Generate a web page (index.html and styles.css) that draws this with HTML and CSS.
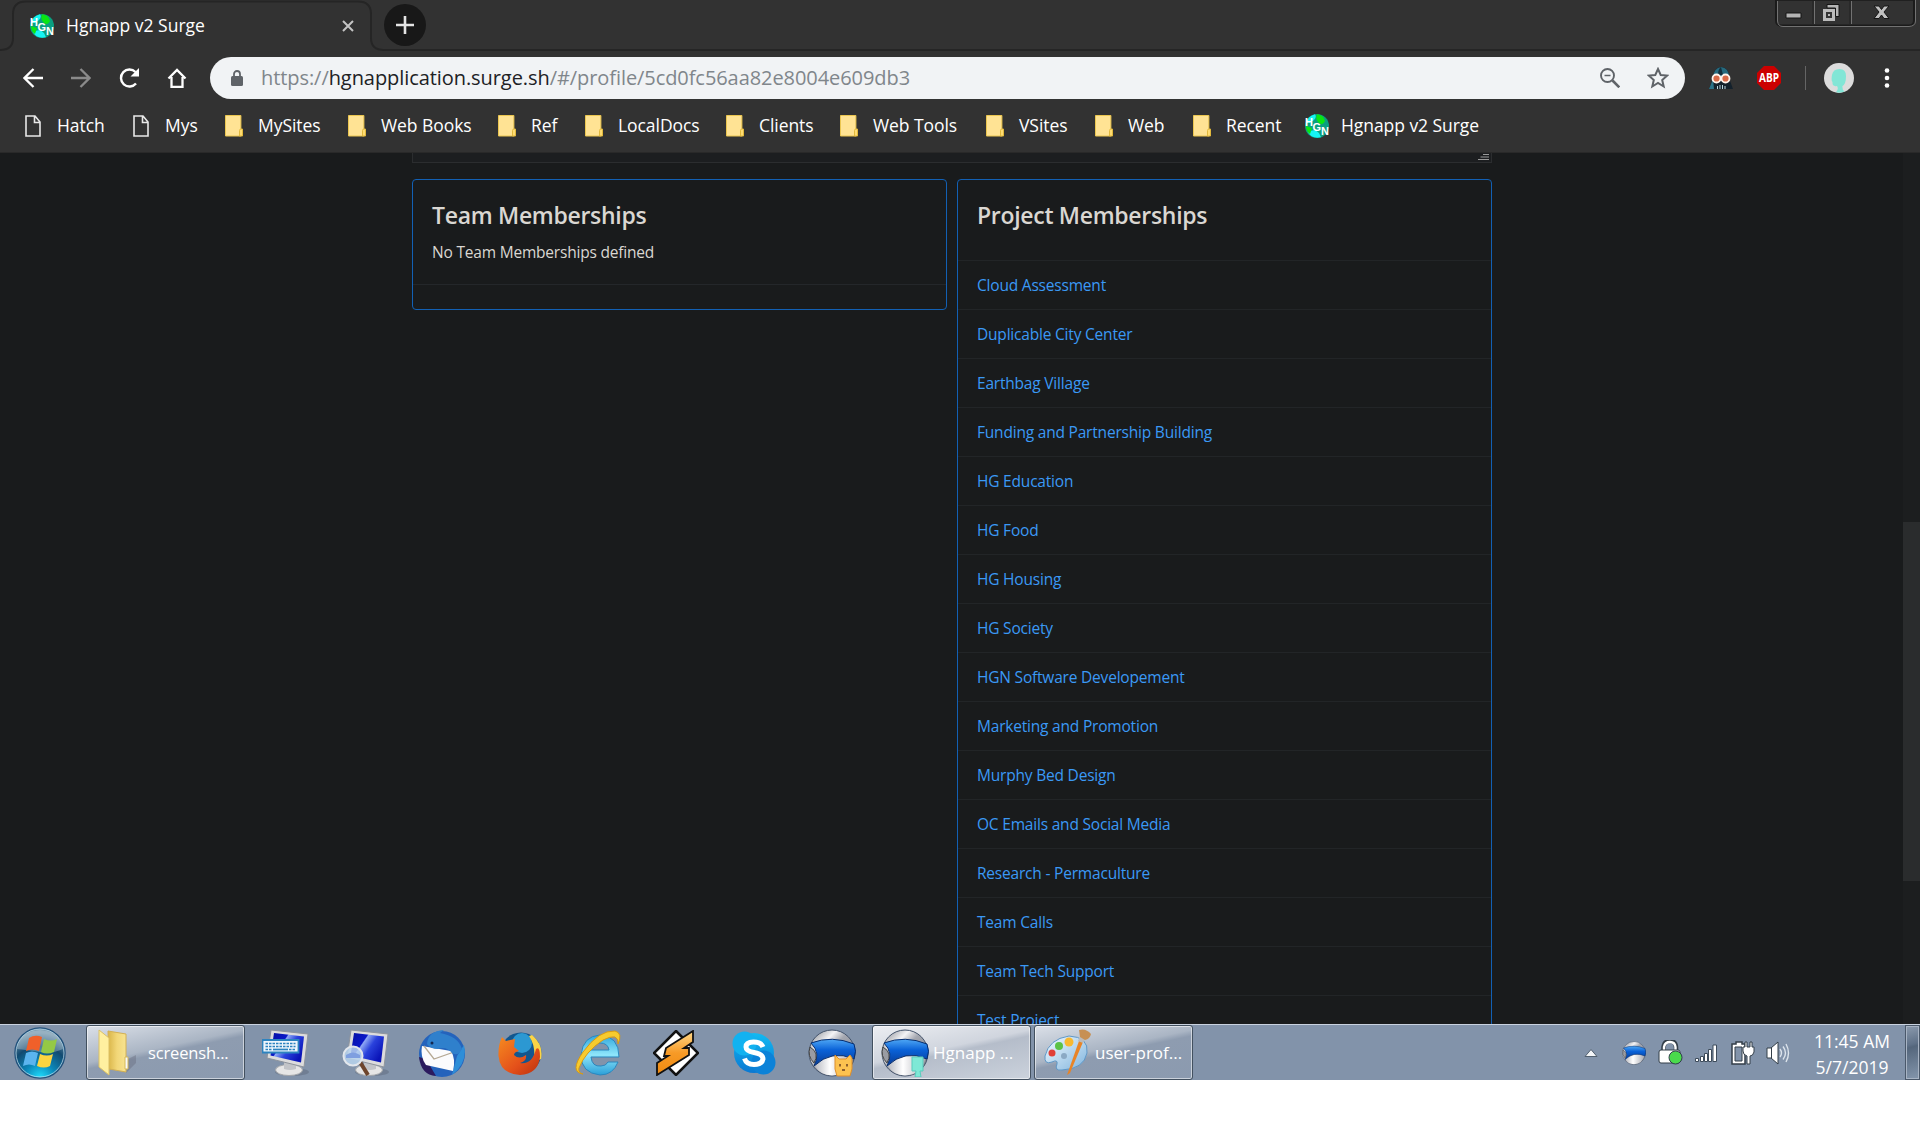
FILE: index.html
```html
<!DOCTYPE html>
<html lang="en">
<head>
<meta charset="utf-8">
<title>Hgnapp v2 Surge</title>
<link rel="stylesheet" href="styles.css">
</head>
<body>
<svg width="0" height="0" class="defs" aria-hidden="true">
  <defs>
    <linearGradient id="silver" x1="0" y1="0" x2="1" y2="1"><stop offset="0" stop-color="#777b84"/><stop offset=".3" stop-color="#f4f4f6"/><stop offset=".45" stop-color="#a4a7b0"/><stop offset="1" stop-color="#787b83"/></linearGradient>
    <linearGradient id="face" x1="0" y1="0" x2="1" y2="0"><stop offset="0" stop-color="#b9bbc2"/><stop offset=".4" stop-color="#ffffff"/><stop offset="1" stop-color="#a9abb3"/></linearGradient>
    <linearGradient id="band" x1="0" y1="0" x2="0" y2="1"><stop offset="0" stop-color="#4fa8f5"/><stop offset=".4" stop-color="#0a62d8"/><stop offset="1" stop-color="#063a94"/></linearGradient>
    <linearGradient id="screen" x1="0" y1="0" x2="1" y2=".6"><stop offset="0" stop-color="#0710a0"/><stop offset=".4" stop-color="#0a18c8"/><stop offset=".43" stop-color="#8fa8f4"/><stop offset=".65" stop-color="#2a42dc"/><stop offset="1" stop-color="#0a14b8"/></linearGradient>
    <radialGradient id="orb" cx=".5" cy="1" r=".9"><stop offset="0" stop-color="#1fe0ff"/><stop offset=".35" stop-color="#0b86b8"/><stop offset=".7" stop-color="#124a70"/><stop offset="1" stop-color="#6f93ab"/></radialGradient>
    <linearGradient id="gold" x1="0" y1="0" x2="1" y2="0"><stop offset="0" stop-color="#d9b548"/><stop offset=".5" stop-color="#f2d778"/><stop offset="1" stop-color="#f7e390"/></linearGradient>
    <linearGradient id="iegrad" x1="0" y1="0" x2="0" y2="1"><stop offset="0" stop-color="#2fa6dc"/><stop offset=".5" stop-color="#8fe6fb"/><stop offset="1" stop-color="#2b9fd8"/></linearGradient>
    <linearGradient id="fox" x1="0" y1="0" x2="1" y2="1"><stop offset="0" stop-color="#f58a20"/><stop offset=".6" stop-color="#e4501a"/><stop offset="1" stop-color="#b8300e"/></linearGradient>
    <linearGradient id="bolt" x1="0" y1="0" x2="0" y2="1"><stop offset="0" stop-color="#ffd98a"/><stop offset=".5" stop-color="#f79a26"/><stop offset="1" stop-color="#f08a10"/></linearGradient>
    <linearGradient id="skype" x1="0" y1="0" x2="0" y2="1"><stop offset="0" stop-color="#12baf2"/><stop offset="1" stop-color="#0a78d2"/></linearGradient>
    <linearGradient id="palette" x1="0" y1="0" x2="1" y2="1"><stop offset="0" stop-color="#f4fbff"/><stop offset="1" stop-color="#7fb4de"/></linearGradient>
    <symbol id="hgn" viewBox="0 0 24 24">
      <circle cx="12" cy="12" r="12" fill="#0a9f80"/>
      <path d="M1 9Q3 2 10 .3Q12 3 9 6L5 9zM3 18Q10 14 14 19L16 23.300Q6 25 3 18z" fill="#16f4f4"/>
      <path d="M12 .2Q19 1 20 7Q18 12 14 9Q10 5 12 .2zM1 12L7 14L5 20Q1 17 1 12z" fill="#0be612"/>
      <g fill="#fff" font-family="Liberation Sans, sans-serif" font-weight="700" font-size="11"><text x="0" y="12">H</text><text x="7.500" y="16.500">G</text><text x="16" y="21">N</text></g>
    </symbol>
    <symbol id="file" viewBox="0 0 16 22"><path d="M1 1h9l5 6v14H1zM9.500 1v6.500H15" fill="none" stroke="#e8e8e8" stroke-width="1.600"/></symbol>
    <symbol id="folder" viewBox="0 0 18 22"><path d="M.5 .5h15.400v20.500H.5z" fill="#ffe394" stroke="#ebc650"/><path d="M14.500 21v-5.500q0-1.500 1.500-1.500h1.500v7z" fill="#ffdc72" stroke="#e2b93c"/></symbol>
    <symbol id="cent" viewBox="0 0 48 48">
      <circle cx="24" cy="24" r="23" fill="url(#silver)" stroke="#44546c"/>
      <path d="M7 37Q22 22 44.500 29Q41 46 24 46.500Q12 46 7 37z" fill="url(#face)"/>
      <path d="M3 14Q24 6 46 15Q49 22 46 30Q24 20 6 37Q13 24 3 14z" fill="url(#band)" stroke="#072e70"/>
      <path d="M2 18Q12 24 6 34Q-1 27 2 18z" fill="#9a9ca3" stroke="#444"/>
    </symbol>
    <symbol id="monitor" viewBox="0 0 48 48">
      <ellipse cx="30" cy="43" rx="17" ry="4" fill="#556070" opacity=".4"/>
      <ellipse cx="27" cy="41" rx="13.500" ry="5.500" fill="#e6e6e6" stroke="#a4a7ab"/>
      <path d="M22 30l12 4v6q-6 2-12 0z" fill="#c2c4c8"/>
      <path d="M9 1L46 5L42 38L5 29z" fill="#dcdcdc" stroke="#8e949d"/>
      <path d="M12 4L42 7.500L39 33.500L8.500 26.500z" fill="url(#screen)"/>
    </symbol>
  </defs>
</svg>

<header class="browser">
  <div class="tabs">
    <svg class="tab-outline" width="1920" height="52" viewBox="0 0 1920 52" fill="none" stroke="#252525" stroke-width="2"><path d="M0 50Q13 50 13 38V14Q13 1.500 26 1.500H358Q371 1.500 371 14V38Q371 50 384 50H1920"/></svg>
    <div class="tab">
      <svg class="favicon"><use href="#hgn"/></svg>
      <span class="label">Hgnapp v2 Surge</span>
      <svg class="close" viewBox="0 0 12 12"><path d="M1 1l10 10M11 1L1 11" stroke="#c4c4c4" stroke-width="2"/></svg>
    </div>
    <div class="newtab"><svg width="18" height="18" viewBox="0 0 18 18"><path d="M9 0v18M0 9h18" stroke="#e4e4e4" stroke-width="2.600"/></svg></div>
    <svg class="winctl" width="142" height="28" viewBox="0 0 142 28">
      <path d="M1 0V20Q1 25.500 6 25.500H134Q139 25.500 139 20V0" fill="none" stroke="#1b1b1b" stroke-width="2"/>
      <path d="M2.500 0V21Q3 26.500 8 26.500H134Q140.500 26 140.500 21V0M39.500 0V24M76.500 0V24" fill="none" stroke="#727272"/>
      <path d="M38 0V24M75 0V24M2 .5H138" stroke="#202020"/>
      <path d="M11 13h15v5H11z" fill="#b4b4b4" stroke="#151515"/>
      <path d="M52 4.500h12v12h-3.500V8H52z" fill="#b4b4b4" stroke="#151515"/>
      <path d="M49.500 10.500h9v9h-9z" fill="#333" stroke="#bbb" stroke-width="3"/><path d="M53 14h2v2h-2z" fill="#bbb"/>
      <path d="M99 6h5l2.500 3.500L109 6h5l-5 6 5 6.500h-5l-2.500-3.500-2.500 3.500h-5l5-6.500z" fill="#c0c0c0" stroke="#151515"/>
    </svg>
  </div>
  <div class="toolbar">
    <nav class="nav">
      <svg viewBox="0 0 20 20"><path d="M20 10H2M10.500 1L1.500 10l9 9" stroke="#fff" stroke-width="2.300"/></svg>
      <svg viewBox="0 0 20 20"><path d="M0 10h18M9.500 1l9 9-9 9" stroke="#8a8a8a" stroke-width="2.300"/></svg>
      <svg viewBox="0 0 20 20"><path d="M17 15.500A8.500 8.500 0 1 1 16.500 4" stroke="#fff" stroke-width="2.400"/><path d="M20 0v8.500h-8.500z" fill="#fff"/></svg>
      <svg viewBox="0 0 20 20"><path d="M1.500 10.500L10 2l8.500 8.500M4.500 9v10h11V9" stroke="#fff" stroke-width="2.300"/></svg>
    </nav>
    <div class="omnibox">
      <svg class="lock" viewBox="0 0 12 16"><path d="M3 7V4a3 3 0 0 1 6 0v3" fill="none" stroke="#5f6368" stroke-width="1.800"/><rect y="6" width="12" height="10" rx="1.500" fill="#5f6368"/></svg>
      <span class="url">https://<b>hgnapplication.surge.sh</b>/#/profile/5cd0fc56aa82e8004e609db3</span>
      <svg class="oicon" viewBox="0 0 20 20" fill="none" stroke="#5f6368"><circle cx="7.500" cy="7.500" r="6.500" stroke-width="1.900"/><path d="M4.500 7.500h6" stroke-width="1.500"/><path d="M12.500 12.500l6.800 6.800" stroke-width="2.600"/></svg>
      <svg class="oicon" viewBox="0 0 22 22"><path d="M11 2l2.700 6 6.500.6-5 4.400 1.500 6.500L11 16l-5.700 3.500L6.800 13l-5-4.400L8.300 8z" fill="none" stroke="#5f6368" stroke-width="2"/></svg>
    </div>
    <svg class="ext vader" viewBox="0 0 24 24"><path d="M0 23L4 12Q5 1 12 1Q20 1 20 12L24 23z" fill="#14212c"/><path d="M4 11Q5 2 12 1Q20 2 20 11z" fill="#266a7e"/><path d="M9 9Q9 3 12 1L14 9z" fill="#14303e"/><path d="M0 23l4-10 1 10z" fill="#2b7288"/><g fill="#d96a48" stroke="#fff3ec" stroke-width="1.800"><circle cx="7.500" cy="12.500" r="4"/><circle cx="16.500" cy="12.500" r="4"/></g><path d="M8.500 20v3M11 19v4M13.500 19v4M16 20v3" stroke="#bcd6de"/></svg>
    <svg class="ext abp" viewBox="0 0 24 24"><path d="M7 0h10l7 7v10l-7 7H7l-7-7V7z" fill="#cc0000"/><text x="12" y="16" text-anchor="middle" textLength="20" lengthAdjust="spacingAndGlyphs" font-family="Open Sans, sans-serif" font-weight="700" font-size="12" fill="#fff">ABP</text></svg>
    <span class="sep"></span>
    <svg class="avatar" viewBox="0 0 30 30"><circle cx="15" cy="15" r="15" fill="#dcdcdc"/><path d="M8 12Q9 6 15.500 6Q22 6 22 13Q22 21 18.500 23Q18 27 20.500 28.500Q16 30.500 12 29Q15 26 13 23Q8 24 8.500 19Q7 18 8 12z" fill="#82e6d6"/></svg>
    <svg class="dots" viewBox="0 0 6 20" fill="#fff"><circle cx="3" cy="2.500" r="2.300"/><circle cx="3" cy="10" r="2.300"/><circle cx="3" cy="17.500" r="2.300"/></svg>
  </div>
  <nav class="bookmarks">
    <a class="page"><svg><use href="#file"/></svg><span>Hatch</span></a>
    <a class="page"><svg><use href="#file"/></svg><span>Mys</span></a>
    <a><svg><use href="#folder"/></svg><span>MySites</span></a>
    <a><svg><use href="#folder"/></svg><span>Web Books</span></a>
    <a><svg><use href="#folder"/></svg><span>Ref</span></a>
    <a><svg><use href="#folder"/></svg><span>LocalDocs</span></a>
    <a><svg><use href="#folder"/></svg><span>Clients</span></a>
    <a><svg><use href="#folder"/></svg><span>Web Tools</span></a>
    <a><svg><use href="#folder"/></svg><span>VSites</span></a>
    <a><svg><use href="#folder"/></svg><span>Web</span></a>
    <a><svg><use href="#folder"/></svg><span>Recent</span></a>
    <a class="site"><svg><use href="#hgn"/></svg><span>Hgnapp v2 Surge</span></a>
  </nav>
</header>

<main class="content">
  <div class="column">
    <div class="textarea"><svg width="11" height="7" viewBox="0 0 11 7"><path d="M5 .5h6M2.500 3h8.500M0 5.500h11" stroke="#999"/></svg></div>
    <div class="cards">
      <section class="card team">
        <h2>Team Memberships</h2>
        <p>No Team Memberships defined</p>
      </section>
      <section class="card project">
        <h2>Project Memberships</h2>
        <ul>
          <li>Cloud Assessment</li>
          <li>Duplicable City Center</li>
          <li>Earthbag Village</li>
          <li>Funding and Partnership Building</li>
          <li>HG Education</li>
          <li>HG Food</li>
          <li>HG Housing</li>
          <li>HG Society</li>
          <li>HGN Software Developement</li>
          <li>Marketing and Promotion</li>
          <li>Murphy Bed Design</li>
          <li>OC Emails and Social Media</li>
          <li>Research - Permaculture</li>
          <li>Team Calls</li>
          <li>Team Tech Support</li>
          <li>Test Project</li>
        </ul>
      </section>
    </div>
  </div>
  <div class="scrollbar"><div class="thumb"></div></div>
</main>

<footer class="taskbar">
  <svg class="start" viewBox="0 0 52 52"><circle cx="26" cy="26" r="25" fill="url(#orb)" stroke="#22527c" stroke-width="1.500"/><circle cx="26" cy="26" r="24" fill="none" stroke="#c6e4f2" stroke-opacity=".7"/><path d="M3 22Q6 4 26 3Q46 4 49 22Q38 27 26 25Q12 23 3 22z" fill="#fff" opacity=".28"/><path d="M15 11Q21 7 28 10L25 24Q18 21 12 24z" fill="#f0602a"/><path d="M30 12Q37 15 43 12L40 25Q33 28 27 25z" fill="#94c946"/><path d="M12 26Q18 23 24 26L21 39Q15 36 9 39z" fill="#5bb4ee"/><path d="M26 27Q33 30 39 27L36 39Q30 42 23 39z" fill="#fcd440"/></svg>
  <div class="task first">
    <svg width="40" height="48" viewBox="0 0 40 48"><path d="M28 44l10-10v-8l-8 4z" fill="#556" opacity=".3"/><path d="M10 2l18 3v38l-17-3z" fill="url(#gold)" stroke="#d3b053"/><path d="M1 1l10 8v37L1 38z" fill="#fff0a0" stroke="#dcc164"/><path d="M27 28h3v12h-3z" fill="#f8fafa" stroke="#d6b858"/></svg>
    <span>screensh...</span>
  </div>
  <svg class="app a1" viewBox="0 0 48 48"><use href="#monitor"/><path d="M.5 11h36v12.500H.5z" fill="#eef6fc" stroke="#2d83bf" stroke-width="1.800"/><path d="M3.500 14.500h30M3.500 17.500h30M3.500 20.500h6M27 20.500h6.500" stroke="#2d83bf" stroke-width="1.700" stroke-dasharray="2.500 1"/><path d="M11 20.500h15" stroke="#2d83bf" stroke-width="1.700"/></svg>
  <svg class="app a2" viewBox="0 0 48 48"><use href="#monitor"/><path d="M18 33l8 13" stroke="#6e452c" stroke-width="4"/><circle cx="11" cy="27" r="9.500" fill="#b9d3ed" fill-opacity=".85" stroke="#e2e6ec" stroke-width="2"/><path d="M4 26q7-5 14 0v3H4z" fill="#7f9fe0"/></svg>
  <svg class="app a3" viewBox="0 0 48 48"><circle cx="24" cy="25" r="23" fill="#2463bc"/><path d="M1 28Q3 46 18 47L8 30z" fill="#2b1a5e"/><path d="M46 16Q50 34 34 46L39 27z" fill="#2e8ed8"/><path d="M4 17L33 22Q38 30 35 42L8 36Q2 28 4 17z" fill="#fbfbfd"/><path d="M6 17l10 13L36 23" fill="none" stroke="#b5a894" stroke-width="1.300"/><path d="M9 15Q10 2 26 1L22 4Q40 7 44 20Q40 28 34 24Q28 17 20 20Q12 20 9 15z" fill="#2f80cc"/><circle cx="14" cy="14" r="1.500" fill="#142850"/></svg>
  <svg class="app a4" viewBox="0 0 44 44"><circle cx="23" cy="22" r="20.500" fill="#12568e"/><circle cx="24" cy="12" r="10" fill="#2c98d2"/><path d="M34 4Q46 14 43 28L36 31Q38 15 31 5z" fill="#fbd445"/><path d="M4 6L8 10L17 8L16 16L21 20Q16 21 16 24Q21 29 28 24Q29 30 22 32Q34 34 38 18Q42 15 42 26Q40 43 22 44Q2 43 .5 25Q0 14 4 6z" fill="url(#fox)"/></svg>
  <svg class="app a5" viewBox="0 0 46 46"><path d="M44 27H16Q17 37 26 36Q31 36 33 32H43Q38 45 25 45Q6 43 6 25Q8 6 25 5Q44 6 44 27zM16 20H34Q33 13 25 13Q17 13 16 20z" fill="url(#iegrad)" stroke="#2c86bd"/><path d="M8 44Q-6 42 8 22Q24 0 40 1Q48 3 43 14Q44 2 28 10Q10 22 4 38Q3 43 8 44z" fill="#f7cb2e" stroke="#d69a16"/></svg>
  <svg class="app a6" viewBox="0 0 46 46"><path d="M23 1L45 23L23 45L1 23z" fill="#fff" stroke="#111" stroke-width="2.500"/><path d="M40 1V12L31 18H36V25L4 45V33L15 26H11L13 18z" fill="url(#bolt)" stroke="#111" stroke-width="1.800"/></svg>
  <svg class="app a7" viewBox="0 0 44 44"><circle cx="22" cy="22" r="20" fill="url(#skype)"/><circle cx="12.500" cy="12.500" r="12" fill="#12b2f0"/><circle cx="31.500" cy="31.500" r="12" fill="#0c82d8"/><path d="M31 16Q29 11 21.500 11Q14 11 14 16Q14 20 22 21.500Q31 23 31 28Q30 33.500 22 33.500Q14.500 33.500 12.500 27.500" fill="none" stroke="#fff" stroke-width="5"/></svg>
  <svg class="app a8" viewBox="0 0 48 48"><use href="#cent"/><path d="M27 26l4 4h7l4-4 2 3v11l-2 7H29l-2-7z" fill="#fcc250" stroke="#dd8e2c"/><path d="M32 35v2.500M39 35v2.500M34 41h3" stroke="#6b4020" stroke-width="1.500"/></svg>
  <div class="task active"><svg width="48" height="48" viewBox="0 0 48 48"><use href="#cent"/><path d="M31 28h11v14h-3l1 6h-6l1-6h-4z" fill="#7ee8d6" stroke="#58cbbc"/></svg><span>Hgnapp ...</span></div>
  <div class="task paint"><svg width="48" height="48" viewBox="0 0 48 48"><path d="M1 27Q5 10 25 7Q45 8 43 24Q40 40 18 41Q10 42 13 35Q14 30 8 33Q0 36 1 27z" fill="url(#palette)" stroke="#5f97c6"/><circle cx="8" cy="24" r="3.500" fill="#e04038"/><circle cx="15" cy="17" r="4" fill="#5cc246"/><circle cx="25" cy="13" r="4.500" fill="#f8b830"/><circle cx="20" cy="27" r="3" fill="#8ba9c4"/><path d="M35 12l4 1L26 44l-3 2z" fill="#e88427"/><path d="M36 7l5 3-2 4-5-2z" fill="#bbb"/><path d="M35 1Q42 -1 47 5Q46 10 41 11L36 8z" fill="#c79054"/></svg><span>user-prof...</span></div>
  <div class="tray">
    <svg width="14" height="8" viewBox="0 0 14 8"><path d="M7 .5L13 7.500H1z" fill="#f4f6f8" stroke="#52606f"/></svg>
    <svg width="24" height="24" class="t2"><use href="#cent"/></svg>
    <svg width="25" height="25" class="t3" viewBox="0 0 25 25"><path d="M5.500 10V7q1-6 6.500-6t6 6v3" fill="none" stroke="#333e48" stroke-width="4.500"/><path d="M6 11V7q1-5 6-5t5.500 5v4" fill="none" stroke="#fff" stroke-width="2.400"/><rect x="1" y="10" width="21" height="13" rx="2" fill="#fff" stroke="#333e48"/><circle cx="17.500" cy="17.500" r="6.500" fill="#4ada4c" stroke="#30404a"/></svg>
    <svg width="22" height="18" class="t4" viewBox="0 0 22 18"><path d="M.5 14.500h3v3h-3zM5.500 12.500h3v5h-3zM9.500 9.500h3v8h-3zM13.500 5.500h3v12h-3zM18 1h3.500v16.500H18z" fill="#fff" stroke="#3d4b5a"/></svg>
    <svg width="24" height="24" class="t5" viewBox="0 0 24 24"><path d="M5 1h6v2h3v20H1V3h4z" fill="#fff" stroke="#333e48" stroke-width="1.500"/><path d="M4 6h7v14H4z" fill="#8293aa" stroke="#333e48"/><path d="M14 1h2v5h3V1h2v5h2v5q-1 4-4 4v8h-3v-8q-4-1-4-5V6h2z" fill="#fff" stroke="#333e48"/></svg>
    <svg width="24" height="24" class="t6" viewBox="0 0 24 24"><path d="M1 7h4l7-6v22l-7-6H1z" fill="#fff" stroke="#333e48"/><path d="M5.500 7v10" stroke="#333e48"/><path d="M14 8q3 4 0 8M17 5.500q5 6.500 0 13M20 3q5 9 0 18" fill="none" stroke="#dce4ec" stroke-width="1.400"/></svg>
    <div class="clock"><span>11:45 AM</span><span>5/7/2019</span></div>
    <div class="peek"></div>
  </div>
</footer>
</body>
</html>
```
FILE: styles.css
```css
* { box-sizing: border-box; }
body { margin: 0; background: #fff; font-family: "Open Sans", "Noto Sans", sans-serif; overflow: hidden; }
svg { display: block; flex: none; }
.defs { position: absolute; }

.browser { height: 153px; background: #323232; border-bottom: 1px solid #292929; color: #fff; }
.tabs { position: relative; height: 52px; display: flex; align-items: flex-start; }
.tab-outline { position: absolute; left: 0; top: 0; }
.tab { width: 371px; height: 51px; padding: 0 17px 0 30px; display: flex; align-items: center; }
.favicon { width: 24px; height: 24px; }
.label { margin-left: 12px; padding-bottom: 2px; flex: 1; font-size: 17.5px; white-space: nowrap; }
.close { width: 12px; height: 12px; }
.newtab { margin: 4px 0 0 13px; width: 42px; height: 42px; border-radius: 50%; background: #181818; display: flex; align-items: center; justify-content: center; }
.winctl { margin-left: auto; margin-right: 3px; }

.toolbar { height: 52px; display: flex; align-items: center; }
.nav { width: 210px; padding-left: 23px; display: flex; gap: 28px; }
.nav svg { width: 20px; height: 20px; fill: none; }
.omnibox { width: 1475px; height: 42px; border-radius: 21px; background: #f1f3f5; display: flex; align-items: center; padding: 0 16px 0 21px; }
.lock { width: 12px; height: 16px; }
.url { margin-left: 18px; padding-bottom: 1px; flex: 1; font-size: 20px; letter-spacing: -.07px; color: #80868b; white-space: nowrap; }
.url b { font-weight: 400; color: #202124; }
.oicon { width: 20px; height: 20px; }
.oicon + .oicon { width: 22px; height: 22px; margin-left: 27px; }
.ext { width: 24px; height: 24px; }
.vader { margin-left: 24px; }
.abp { margin-left: 24px; }
.sep { width: 1px; height: 24px; margin-left: 24px; background: #656565; }
.avatar { width: 30px; height: 30px; margin-left: 18px; }
.dots { width: 6px; height: 20px; margin-left: 30px; }

.bookmarks { height: 44px; padding-left: 25px; display: grid; grid-template-columns: 108px 92px 123px 150px 87px 141px 114px 146px 109px 98px 112px 1fr; align-items: center; }
.bookmarks a { display: flex; align-items: center; font-size: 17.5px; letter-spacing: -.06px; white-space: nowrap; }
.bookmarks span { padding-bottom: 2px; }
.bookmarks svg { width: 18px; height: 22px; margin-right: 15px; }
.bookmarks .page svg { width: 16px; margin-right: 16px; }
.bookmarks .site svg { width: 24px; height: 24px; margin-right: 12px; }

.content { height: 871px; background: #191b1c; display: flex; overflow: hidden; color: #dad7d2; }
.column { width: 1080px; margin-left: 412px; }
.textarea { height: 10px; border: 1px solid #2b2d2f; border-top: 0; background: #1c1e20; display: flex; justify-content: flex-end; padding: 1px 2px 0 0; }
.cards { display: flex; gap: 10px; align-items: flex-start; margin-top: 16px; }
.card { width: 535px; border: 1px solid #1260b4; border-radius: 4px; }
.card h2 { margin: 0; padding: 20px 19px 0; font-size: 23px; line-height: 30px; font-weight: 600; letter-spacing: -.3px; }
.team { height: 131px; }
.team p { margin: 0; padding: 10px 19px 0; height: 55px; font-size: 15.5px; line-height: 24px; letter-spacing: -.2px; border-bottom: 1px solid #24272a; }
.project { height: 900px; }
.project ul { list-style: none; margin: 30px 0 0; padding: 0; border-top: 1px solid #222527; }
.project li { height: 49px; line-height: 48px; padding-left: 19px; font-size: 15.5px; letter-spacing: -.2px; color: #3b99f5; border-bottom: 1px solid #222527; }
.scrollbar { width: 17px; margin-left: auto; background: #1c1e1f; padding-top: 369px; }
.thumb { height: 359px; background: #2a2c2d; }

.taskbar { height: 56px; background: #8293aa; border-top: 1px solid #c9d2df; display: flex; align-items: center; color: #fff; }
.start { width: 52px; height: 52px; margin-left: 14px; }
.task { width: 159px; height: 55px; border: 1px solid #42505f; border-radius: 3px; box-shadow: inset 0 0 0 1px rgba(255,255,255,.55); background: linear-gradient(168deg, #dbe0e8 0%, #aab5c4 43%, #8e9cb0 50%, #8b9aaf 100%); display: flex; align-items: center; font-size: 17px; white-space: nowrap; }
.first { margin-left: 20px; padding-left: 11px; font-size: 16.5px; letter-spacing: -.15px; }
.first span { margin-left: 10px; }
.active { background: linear-gradient(168deg, #eceef2 0%, #d0d5de 43%, #b5bdca 50%, #cbd2dc 100%); padding-left: 8px; }
.active span { margin-left: 4px; }
.paint { margin-left: 3px; padding-left: 9px; }
.paint span { margin-left: 3px; }
.app { width: 48px; height: 48px; }
.a1 { margin-left: 17px; }
.a2 { margin-left: 32px; }
.a3 { margin-left: 28px; }
.a4 { width: 44px; height: 44px; margin-left: 32px; }
.a5 { width: 46px; height: 46px; margin-left: 33px; }
.a6 { width: 46px; height: 46px; margin-left: 32px; }
.a7 { width: 44px; height: 44px; margin-left: 33px; }
.a8 { margin-left: 32px; margin-right: 16px; }
.tray { margin-left: auto; height: 55px; display: flex; align-items: center; }
.t2 { margin-left: 24px; }
.t3 { margin-left: 12px; }
.t4 { margin-left: 12px; }
.t5 { margin-left: 14px; }
.t6 { margin-left: 11px; }
.clock { width: 115px; padding: 2px 0 0 9px; display: flex; flex-direction: column; align-items: center; font-size: 17.5px; line-height: 26px; }
.peek { width: 15px; height: 55px; border: 1px solid #4a586a; box-shadow: inset 0 0 0 1px #a8b4c4; background: linear-gradient(165deg, #8c9bae, #5f7188 35%, #54667c 40%, #8496ac); }
```
